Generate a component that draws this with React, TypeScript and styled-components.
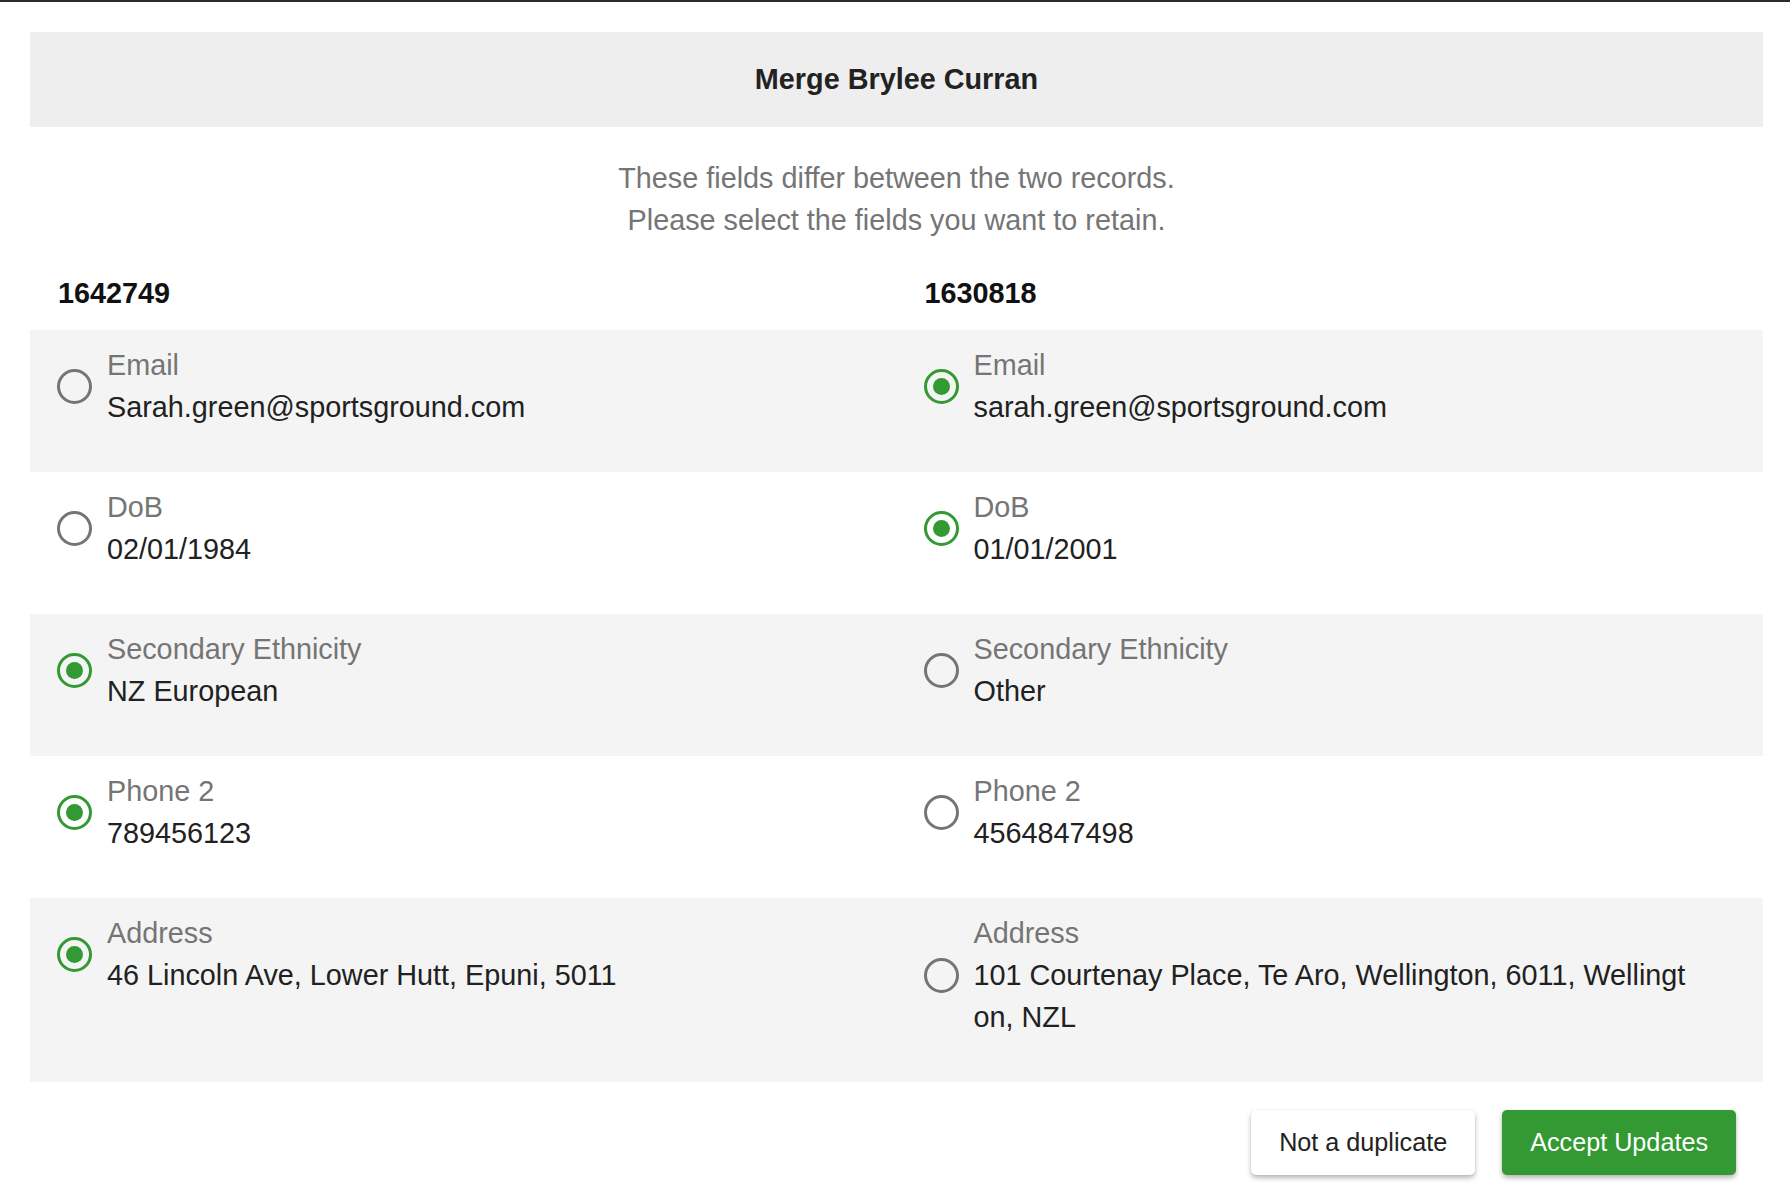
import React, { FC, useState } from 'react';
import styled, { createGlobalStyle } from 'styled-components';

const GlobalStyle = createGlobalStyle`
  html, body {
    margin: 0;
    padding: 0;
    background: #fff;
  }
  body {
    font-family: "Liberation Sans", Arial, sans-serif;
  }
  * {
    box-sizing: border-box;
  }
`;

const Page = styled.div`
  border-top: 2px solid #2b2b2b;
  padding: 0 27px 40px 30px;
  min-height: 100vh;
  color: #212121;
`;

const Header = styled.div`
  margin-top: 30px;
  height: 95px;
  background: #eeeeee;
  display: flex;
  align-items: center;
  justify-content: center;
`;

const Title = styled.h1`
  margin: 0;
  font-size: 28.8px;
  font-weight: 700;
  color: #222;
`;

const Intro = styled.p`
  margin: 30px 0 0;
  text-align: center;
  font-size: 28.8px;
  line-height: 42px;
  color: #757575;
`;

const Grid = styled.div`
  display: grid;
  grid-template-columns: 1fr 1fr;
`;

const RecordId = styled.div`
  padding: 31px 28px 16px;
  font-size: 28.8px;
  line-height: 42px;
  font-weight: 700;
  color: #111;
`;

const Row = styled.div<{ $shaded: boolean }>`
  display: grid;
  grid-template-columns: 1fr 1fr;
  align-items: start;
  background: ${p => (p.$shaded ? '#f4f4f4' : '#fff')};
`;

const Cell = styled.label`
  display: flex;
  align-items: center;
  padding: 14px 68px 44px 27px;
  cursor: pointer;
`;

const Radio = styled.span<{ $checked: boolean }>`
  flex: 0 0 auto;
  width: 35px;
  height: 35px;
  margin-right: 15px;
  border-radius: 50%;
  border: 3.5px solid ${p => (p.$checked ? '#339933' : '#757575')};
  display: flex;
  align-items: center;
  justify-content: center;

  &::after {
    content: '';
    width: 17px;
    height: 17px;
    border-radius: 50%;
    background: ${p => (p.$checked ? '#339933' : 'transparent')};
  }
`;

const FieldText = styled.div`
  min-width: 0;
  font-size: 28.8px;
  line-height: 42px;
`;

const FieldLabel = styled.div`
  color: #757575;
`;

const FieldValue = styled.div`
  color: #212121;
  word-break: break-all;
`;

const Footer = styled.div`
  display: flex;
  justify-content: flex-end;
  gap: 27px;
  margin-top: 28px;
  padding-right: 27px;
`;

const Button = styled.button<{ $primary?: boolean }>`
  height: 65px;
  padding: 0 28px;
  border: 0;
  border-radius: 5px;
  font-family: "Liberation Sans", Arial, sans-serif;
  font-size: 25.2px;
  color: ${p => (p.$primary ? '#fff' : '#222')};
  background: ${p => (p.$primary ? '#339933' : '#fff')};
  box-shadow: 0 3px 5px rgba(0, 0, 0, 0.28), 0 0 2px rgba(0, 0, 0, 0.08);
  cursor: pointer;
`;

interface IField {
  label: string;
  left: string;
  right: string;
  pick: 'left' | 'right';
}

const fields: IField[] = [
  { label: 'Email', left: 'Sarah.green@sportsground.com', right: 'sarah.green@sportsground.com', pick: 'right' },
  { label: 'DoB', left: '02/01/1984', right: '01/01/2001', pick: 'right' },
  { label: 'Secondary Ethnicity', left: 'NZ European', right: 'Other', pick: 'left' },
  { label: 'Phone 2', left: '789456123', right: '4564847498', pick: 'left' },
  {
    label: 'Address',
    left: '46 Lincoln Ave, Lower Hutt, Epuni, 5011',
    right: '101 Courtenay Place, Te Aro, Wellington, 6011, Wellington, NZL',
    pick: 'left',
  },
];

const App: FC = () => {
  const [picks, setPicks] = useState(fields.map(f => f.pick));

  const choose = (i: number, side: 'left' | 'right') =>
    setPicks(prev => prev.map((p, j) => (j === i ? side : p)));

  return (
    <Page>
      <GlobalStyle />
      <Header>
        <Title>Merge Brylee Curran</Title>
      </Header>
      <Intro>
        These fields differ between the two records.
        <br />
        Please select the fields you want to retain.
      </Intro>
      <Grid>
        <RecordId>1642749</RecordId>
        <RecordId>1630818</RecordId>
      </Grid>
      {fields.map((f, i) => (
        <Row key={f.label} $shaded={i % 2 === 0}>
          {(['left', 'right'] as const).map(side => (
            <Cell key={side} onClick={() => choose(i, side)}>
              <Radio $checked={picks[i] === side} />
              <FieldText>
                <FieldLabel>{f.label}</FieldLabel>
                <FieldValue>{f[side]}</FieldValue>
              </FieldText>
            </Cell>
          ))}
        </Row>
      ))}
      <Footer>
        <Button>Not a duplicate</Button>
        <Button $primary>Accept Updates</Button>
      </Footer>
    </Page>
  );
};

export default App;
